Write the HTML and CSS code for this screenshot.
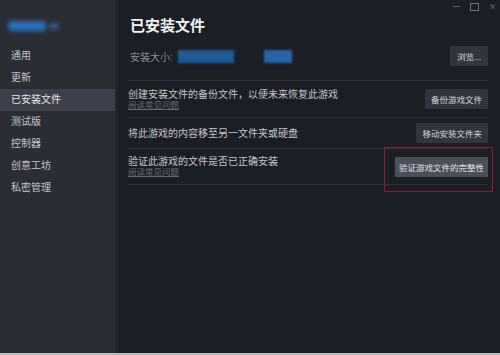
FILE: index.html
```html
<!DOCTYPE html>
<html>
<head>
    <title>已安装文件</title>
    <link rel="stylesheet" href="styles.css">
</head>
<body>
    <div class="app">
        <!-- Sidebar -->
        <div class="sidebar">
            <div class="logo"><span class="blob"></span><span class="blob small"></span></div>
            <ul class="nav">
                <li>通用</li>
                <li>更新</li>
                <li class="active">已安装文件</li>
                <li>测试版</li>
                <li>控制器</li>
                <li>创意工坊</li>
                <li>私密管理</li>
            </ul>
        </div>

        <!-- Main panel -->
        <div class="main">
            <div class="window-controls">
                <span class="ctl-min"></span>
                <span class="ctl-max"></span>
                <span class="ctl-close">✕</span>
            </div>
            <h1>已安装文件</h1>

            <div class="size-row">
                <span class="size-label">安装大小:</span>
                <span class="size-blur one"></span>
                <span class="size-blur two"></span>
                <button class="btn browse">浏览...</button>
            </div>

            <div class="row first">
                <div class="row-text">
                    <div class="desc">创建安装文件的备份文件，以便未来恢复此游戏</div>
                    <a class="faq">阅读常见问题</a>
                </div>
                <button class="btn">备份游戏文件</button>
            </div>
            <div class="row move">
                <div class="row-text">
                    <div class="desc">将此游戏的内容移至另一文件夹或硬盘</div>
                </div>
                <button class="btn">移动安装文件夹</button>
            </div>
            <div class="row verify">
                <div class="row-text">
                    <div class="desc">验证此游戏的文件是否已正确安装</div>
                    <a class="faq">阅读常见问题</a>
                </div>
                <button class="btn light marked">验证游戏文件的完整性</button>
            </div>
        </div>
    </div>
    <div class="taskbar"></div>
</body>
</html>
```

FILE: styles.css
```css
html, body { margin: 0; height: 100%; }
body {
    background: #1b1e25;
    font-family: "Liberation Sans", "Noto Sans CJK SC", sans-serif;
    overflow: hidden;
}
.app { display: flex; height: 353px; }
.taskbar { height: 2px; background: #b9bcc0; }

.sidebar {
    width: 115px;
    background: #2b2d35;
    border-right: 3px solid #24262d;
    flex-shrink: 0;
}
.logo { display: flex; align-items: center; gap: 3px; height: 14px; margin: 19px 0 0 8px; }
.blob {
    width: 38px;
    height: 10px;
    background: #2a6fb8;
    border-radius: 4px;
    filter: blur(2px);
}
.blob.small { width: 10px; height: 6px; background: #2f5f95; }
.nav { list-style: none; margin: 12px 0 0 0; padding: 0; }
.nav li {
    height: 22px;
    line-height: 22px;
    padding-left: 11px;
    font-size: 10px;
    color: #c3c5cb;
}
.nav li.active { background: #3d404a; color: #e6e7ea; }

.main { flex: 1; padding: 0 12px 0 10px; display: flex; flex-direction: column; }
.window-controls {
    display: flex;
    justify-content: flex-end;
    align-items: center;
    gap: 10px;
    height: 13px;
    margin-right: -9px;
}
.ctl-min { width: 7px; height: 1px; background: #5d6068; }
.ctl-max { width: 7px; height: 6px; border: 1px solid #70737b; }
.ctl-close { font-size: 9px; color: #5d6068; line-height: 10px; }

h1 {
    margin: 3px 0 0 2px;
    font-size: 15px;
    line-height: 20px;
    font-weight: bold;
    color: #f4f5f7;
}

.size-row { display: flex; align-items: center; height: 20px; margin-top: 10px; padding-bottom: 14px; border-bottom: 1px solid #2d3139; }
.size-label { font-size: 10px; color: #8a8d95; padding-left: 2px; width: 44px; }
.size-blur { height: 13px; background: #1f5a95; filter: blur(1px); }
.size-blur.one { width: 56px; margin-left: 4px; }
.size-blur.two { width: 28px; margin-left: 30px; background: #2466a6; }
.size-row .browse { margin-left: auto; }

.btn {
    height: 20px;
    padding: 0 6px;
    border: none;
    border-radius: 1px;
    background: #32353e;
    color: #d3d5d9;
    font-family: inherit;
    font-size: 8.5px;
    margin: 0;
}
.size-row .btn { padding: 0 7px; }
.btn.light { background: #4b4f59; color: #e2e3e6; padding: 0 4px; }
.btn.marked { position: relative; }
.btn.marked::after {
    content: "";
    position: absolute;
    top: -10px;
    left: -11px;
    right: -5px;
    bottom: -15px;
    border: 1px solid #8c1f2b;
}

.row {
    display: flex;
    align-items: center;
    justify-content: space-between;
    border-bottom: 1px solid #2d3139;
}
.row.first { height: 36px; }
.row.move { height: 30px; }
.row.verify { height: 35px; }
.desc { font-size: 10px; line-height: 11px; color: #c4c6cb; }
.faq {
    display: block;
    margin-top: 1px;
    font-size: 8.5px;
    line-height: 9px;
    color: #666a73;
    text-decoration: underline;
}
```
